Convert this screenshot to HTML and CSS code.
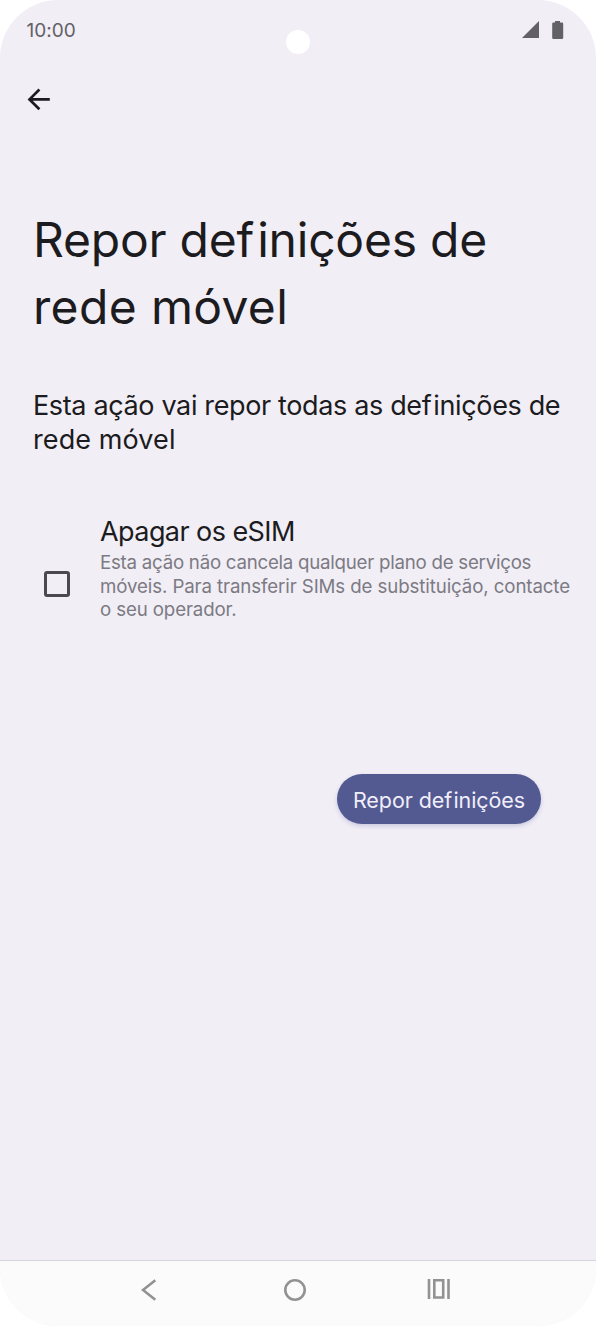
FILE: index.html
```html
<!DOCTYPE html>
<html lang="pt">
<head>
<meta charset="utf-8">
<title>Repor definições de rede móvel</title>
<link rel="stylesheet" href="styles.css">
</head>
<body>
<div class="phone">
  <header class="status">
    <span class="clock">10:00</span>
    <svg class="indicators" width="42" height="20" viewBox="0 0 42 20"><path d="M0 17 17 0v17z"/><path d="M33 0h5v1.5h2q1.2 0 1.2 1.2v14q0 1.2-1.2 1.2h-8.6q-1.2 0-1.2-1.2v-14q0-1.2 1.2-1.2H33z"/></svg>
    <i class="camera"></i>
  </header>
  <div class="toolbar">
    <svg width="24" height="24" viewBox="0 0 24 24"><path d="M22.8 12.4H2.8M12.4 2.5 2.5 12.4l9.9 9.9"/></svg>
  </div>
  <main>
    <h1><span class="t1">Repor de<b>f</b>inições de</span><span class="t2">rede móvel</span></h1>
    <p class="lead"><span class="l1">Esta ação vai repor todas as de<b>f</b>inições de</span><span class="l2">rede móvel</span></p>
    <section class="option">
      <i class="checkbox"></i>
      <div>
        <h2>Apagar os eSIM</h2>
        <p class="desc"><span class="d1">Esta ação não cancela qualquer plano de serviços</span><span class="d2">móveis. Para transferir SIMs de substituição, contacte</span><span class="d3">o seu operador.</span></p>
      </div>
    </section>
    <button class="reset">Repor de<b>f</b>inições</button>
  </main>
  <nav class="navbar">
    <svg width="16" height="22" viewBox="0 0 16 22"><path d="M14.3 1.2 2 11l12.3 9.8"/></svg>
    <svg class="home" width="24" height="24" viewBox="0 0 24 24"><circle cx="12" cy="12" r="9.7"/></svg>
    <svg class="recents" width="24" height="20" viewBox="0 0 24 20"><path d="M2 0v20M21.5 0v20M7.3 1.3h8.9v17.2H7.3z"/></svg>
  </nav>
</div>
</body>
</html>
```
FILE: styles.css
```css
* { box-sizing: border-box; margin: 0; padding: 0; }
body {
  background: #fff;
  font-family: Inter, "Open Sans", sans-serif;
  font-variant-ligatures: none;
  color: #1c1b20;
}
b { font-weight: inherit; letter-spacing: 0.06em; }
.phone {
  width: 596px;
  height: 1326px;
  display: flex;
  flex-direction: column;
  overflow: hidden;
  border-radius: 58px;
  background: #f1eef6;
}
.status {
  position: relative;
  height: 62px;
  padding: 19px 32px 0 26.5px;
  display: flex;
  justify-content: space-between;
  align-items: flex-start;
}
.clock { font-size: 19px; line-height: 24px; color: #626166; }
.indicators { margin-top: 2.2px; fill: #626166; overflow: visible; }
.camera {
  position: absolute;
  left: 286px;
  top: 30px;
  width: 24px;
  height: 24px;
  border-radius: 50%;
  background: #fff;
}
.toolbar { height: 144px; padding: 25px 27px; }
.toolbar svg { display: block; fill: none; stroke: #1c1b20; stroke-width: 2.7; }
main { flex: 1; display: flex; flex-direction: column; padding: 0 24px 0 33px; }
h1 span, p span { display: block; white-space: nowrap; }
h1 { font-size: 48px; line-height: 67px; font-weight: 400; }
.t1 { letter-spacing: -0.22px; }
.t2 { letter-spacing: 0.35px; }
.lead { margin-top: 49px; font-size: 27px; line-height: 33.5px; }
.l1 { letter-spacing: -0.36px; }
.l2 { letter-spacing: 0.1px; }
.option { margin-top: 58px; display: flex; gap: 30px; }
.checkbox {
  flex: none;
  width: 26px;
  height: 26px;
  margin: 57px 0 0 11px;
  border: 3px solid #4a494f;
  border-radius: 3px;
}
h2 { font-size: 27px; line-height: 36px; font-weight: 400; letter-spacing: -0.57px; }
.desc { margin-top: 1px; font-size: 18.7px; line-height: 23.7px; color: #7c7a83; }
.d1 { letter-spacing: -0.25px; }
.d2 { letter-spacing: -0.11px; }
.d3 { letter-spacing: -0.13px; }
.reset {
  align-self: flex-end;
  width: 204px;
  height: 50px;
  margin: 152px 31px 0 0;
  border: 0;
  border-radius: 25px;
  background: #535a92;
  color: #f1eefa;
  font: 21.5px/48px Inter, "Open Sans", sans-serif;
  font-variant-ligatures: none;
  letter-spacing: -0.08px;
  padding-top: 2px;
  white-space: nowrap;
  box-shadow: 0 2px 4px rgba(83, 90, 160, 0.25);
}
.navbar {
  height: 66px;
  padding: 0 145px 8px 141px;
  display: flex;
  justify-content: space-between;
  align-items: center;
  border-top: 1px solid #d6d3dc;
  background: #fbfbfb;
}
.navbar svg { fill: none; stroke: #929292; stroke-width: 2.6; }
.navbar .home { margin-left: 6px; }
.navbar .recents { margin-bottom: 2px; }
```
